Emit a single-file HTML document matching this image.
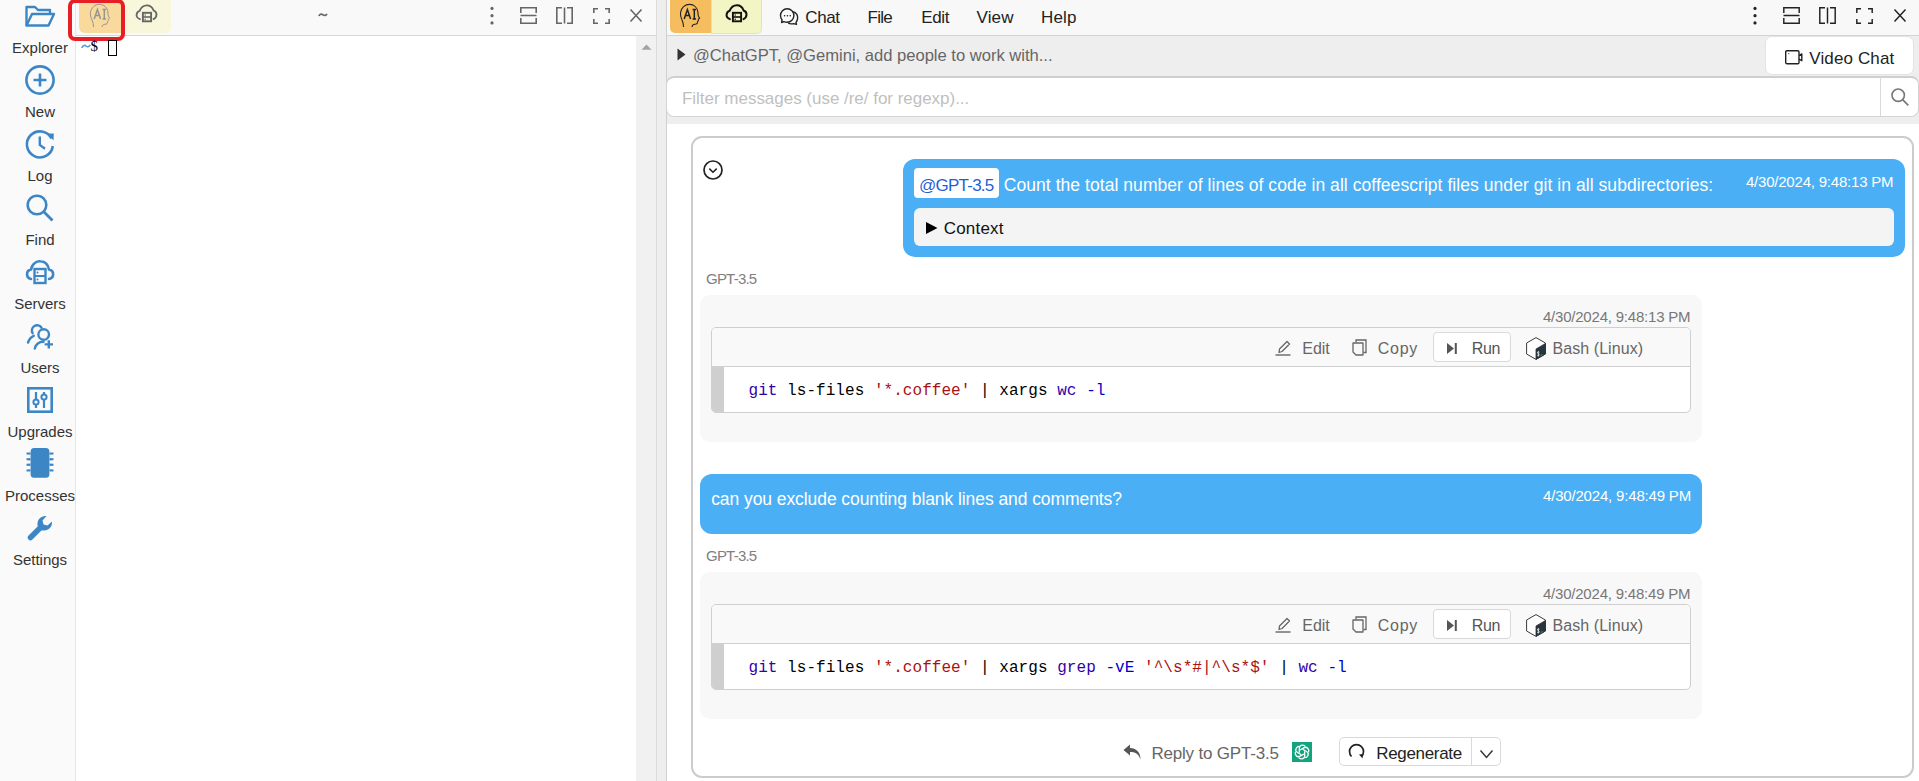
<!DOCTYPE html>
<html><head><meta charset="utf-8">
<style>
*{box-sizing:border-box;margin:0;padding:0}
html,body{width:1919px;height:781px;overflow:hidden;background:#fff;position:relative;font-family:"Liberation Sans",sans-serif}
.a{position:absolute}
.t{position:absolute;line-height:1;white-space:nowrap;font-family:"Liberation Sans",sans-serif}
.m{font-family:"Liberation Mono",monospace}
svg{position:absolute;overflow:visible}
</style></head><body>

<div class="a" style="left:0px;top:0px;width:76px;height:781px;background:#fafafa;border-right:1px solid #e6e6e6"></div>
<div class="t" style="left:12.07px;top:40.00px;font-size:15px;color:#333;letter-spacing:0.000px;">Explorer</div>
<div class="t" style="left:25.00px;top:104.00px;font-size:15px;color:#333;letter-spacing:0.000px;">New</div>
<div class="t" style="left:27.49px;top:168.00px;font-size:15px;color:#333;letter-spacing:0.000px;">Log</div>
<div class="t" style="left:25.41px;top:232.00px;font-size:15px;color:#333;letter-spacing:0.000px;">Find</div>
<div class="t" style="left:14.16px;top:296.00px;font-size:15px;color:#333;letter-spacing:0.000px;">Servers</div>
<div class="t" style="left:20.41px;top:360.00px;font-size:15px;color:#333;letter-spacing:0.000px;">Users</div>
<div class="t" style="left:7.48px;top:424.00px;font-size:15px;color:#333;letter-spacing:0.000px;">Upgrades</div>
<div class="t" style="left:4.99px;top:488.00px;font-size:15px;color:#333;letter-spacing:0.000px;">Processes</div>
<div class="t" style="left:12.90px;top:552.00px;font-size:15px;color:#333;letter-spacing:0.000px;">Settings</div>
<svg style="left:25px;top:5px" width="30" height="22" viewBox="0 0 30 22"><path d="M1.5 20.5 V2 H10 L13 5 H25 V9" fill="none" stroke="#3d86c6" stroke-width="2.4" stroke-linejoin="round"/><path d="M1.5 20.5 L7 9 H29 L23.5 20.5 Z" fill="none" stroke="#3d86c6" stroke-width="2.4" stroke-linejoin="round"/></svg>
<svg style="left:25px;top:65px" width="30" height="30" viewBox="0 0 30 30"><circle cx="15" cy="15" r="13.6" fill="none" stroke="#3d86c6" stroke-width="2.6"/><path d="M15 8.5V21.5M8.5 15H21.5" stroke="#3d86c6" stroke-width="2.6"/></svg>
<svg style="left:25px;top:129px" width="30" height="30" viewBox="0 0 30 30"><path d="M26.5 9.5 A13 13 0 1 0 27.8 17" fill="none" stroke="#3d86c6" stroke-width="2.6"/><path d="M22 4.5 L28.8 4.5 L28.5 11.5 Z" fill="#3d86c6"/><path d="M14.8 7.5 V16 L20 19.8" fill="none" stroke="#3d86c6" stroke-width="2.4"/></svg>
<svg style="left:26px;top:194px" width="28" height="27" viewBox="0 0 28 27"><circle cx="11" cy="11" r="9.3" fill="none" stroke="#3d86c6" stroke-width="2.6"/><path d="M17.8 17.8 L26.5 26.5" stroke="#3d86c6" stroke-width="2.8"/></svg>
<svg style="left:25px;top:260px" width="30" height="24" viewBox="0 0 30 24"><path d="M6 19 C1 18 0.5 10.5 6 9.5 C7 3.5 12 0.8 15.5 1.3 C20 1.5 23 4.5 24 9.5 C29.5 10.5 29.5 18 24 19" fill="none" stroke="#3d86c6" stroke-width="2.6" stroke-linecap="round"/><rect x="9.5" y="9" width="11" height="14" fill="none" stroke="#3d86c6" stroke-width="2.4"/><path d="M9.5 16H20.5" stroke="#3d86c6" stroke-width="2"/><circle cx="12.5" cy="12.5" r="1" fill="#3d86c6"/><circle cx="12.5" cy="19.5" r="1" fill="#3d86c6"/></svg>
<svg style="left:27px;top:323px" width="27" height="26" viewBox="0 0 27 26"><circle cx="16.7" cy="11.5" r="5.3" fill="none" stroke="#3d86c6" stroke-width="2.4"/><path d="M5.6 10.2 A5.2 5.2 0 1 1 14.6 4.8" fill="none" stroke="#3d86c6" stroke-width="2.4" stroke-linecap="round"/><path d="M1 19.5 C2 16.5 4 14 6.8 12.8" fill="none" stroke="#3d86c6" stroke-width="2.4" stroke-linecap="round"/><path d="M7.8 25.5 C8.8 21.5 12 18.8 16.5 18.8" fill="none" stroke="#3d86c6" stroke-width="2.4" stroke-linecap="round"/><path d="M21.8 17.2V25.6M17.6 21.4H26" stroke="#3d86c6" stroke-width="2.4"/></svg>
<svg style="left:27px;top:387px" width="26" height="26" viewBox="0 0 26 26"><rect x="1.3" y="1.3" width="23.4" height="23.4" fill="none" stroke="#3d86c6" stroke-width="2.6"/><path d="M9 5V21M17 5V21" stroke="#3d86c6" stroke-width="2.2"/><circle cx="9" cy="15" r="2.6" fill="#fafafa" stroke="#3d86c6" stroke-width="2"/><circle cx="17" cy="10" r="2.6" fill="#fafafa" stroke="#3d86c6" stroke-width="2"/></svg>
<svg style="left:25px;top:448px" width="30" height="30" viewBox="0 0 30 30"><rect x="5.6" y="0" width="18.8" height="29.8" rx="3.5" fill="#3d86c6"/><path d="M1.5 4.6 L5.5 4.3999999999999995 V6.8 L1.5 6.6 Z" fill="#3d86c6"/><path d="M28.5 4.6 L24.5 4.3999999999999995 V6.8 L28.5 6.6 Z" fill="#3d86c6"/><path d="M1.5 10.2 L5.5 10.0 V12.399999999999999 L1.5 12.2 Z" fill="#3d86c6"/><path d="M28.5 10.2 L24.5 10.0 V12.399999999999999 L28.5 12.2 Z" fill="#3d86c6"/><path d="M1.5 15.8 L5.5 15.600000000000001 V18.0 L1.5 17.8 Z" fill="#3d86c6"/><path d="M28.5 15.8 L24.5 15.600000000000001 V18.0 L28.5 17.8 Z" fill="#3d86c6"/><path d="M1.5 21.4 L5.5 21.2 V23.599999999999998 L1.5 23.4 Z" fill="#3d86c6"/><path d="M28.5 21.4 L24.5 21.2 V23.599999999999998 L28.5 23.4 Z" fill="#3d86c6"/></svg>
<svg style="left:27.5px;top:515px" width="25" height="25" viewBox="0 0 25 25"><path d="M2.5 22.5 L12.5 12.5" stroke="#3d86c6" stroke-width="5.5" stroke-linecap="round"/><path d="M10 12 C8 6 12 0.5 18.5 1 L14.5 5.5 L15.5 9.5 L19.5 10.5 L24 6.5 C24.5 13 19 17 13 15 Z" fill="#3d86c6"/></svg>
<div class="a" style="left:76px;top:0px;width:580px;height:36px;background:#f9f9f9;border-bottom:1px solid #d6d6d6"></div>
<div class="a" style="left:79px;top:0px;width:42px;height:33px;background:#f9d99c;border-radius:0 0 0 6px"></div>
<div class="a" style="left:121px;top:0px;width:50px;height:33px;background:#f8f7dc;border-radius:0 0 6px 0"></div>
<div class="a" style="left:68px;top:-1px;width:57px;height:41.5px;border:4.6px solid #e81e27;border-radius:7px"></div>
<svg style="left:317.5px;top:12.5px" width="10" height="4" viewBox="0 0 10 4"><path d="M0.9 3 C1.8 1 3.3 0.6 4.8 1.7 C6.2 2.8 7.8 2.9 9 0.9" fill="none" stroke="#666" stroke-width="1.7"/></svg>
<svg style="left:489.6px;top:6px" width="4" height="19" viewBox="0 0 4 19"><circle cx="2" cy="2.4" r="1.6" fill="#666"/><circle cx="2" cy="9.7" r="1.6" fill="#666"/><circle cx="2" cy="16.9" r="1.6" fill="#666"/></svg>
<svg style="left:520px;top:7px" width="17" height="17" viewBox="0 0 17 17"><path d="M0.8 6 V0.8 H16.2 V6 M0.8 11 V16.2 H16.2 V11 M0.5 8.5 H16.5" fill="none" stroke="#666" stroke-width="1.6"/></svg>
<svg style="left:556px;top:7px" width="17" height="17" viewBox="0 0 17 17"><path d="M6 0.8 H0.8 V16.2 H6 M11 0.8 H16.2 V16.2 H11 M8.5 0.5 V16.5" fill="none" stroke="#666" stroke-width="1.6"/></svg>
<svg style="left:592.5px;top:8px" width="17" height="16" viewBox="0 0 17 16"><path d="M0.8 5 V0.8 H5 M12 0.8 H16.2 V5 M0.8 11 V15.2 H5 M12 15.2 H16.2 V11" fill="none" stroke="#666" stroke-width="1.6"/></svg>
<svg style="left:630px;top:9px" width="12" height="13" viewBox="0 0 12 13"><path d="M0.5 0.5 L11.5 12.5 M11.5 0.5 L0.5 12.5" fill="none" stroke="#666" stroke-width="1.6"/></svg>
<svg style="left:81px;top:44px" width="10" height="5" viewBox="0 0 10 5"><path d="M0.8 4 C2 1.2 3.8 0.8 5 2 C6.2 3.2 8 3.2 9.2 0.8" fill="none" stroke="#5b9bd5" stroke-width="1.6"/></svg>
<div class="t" style="left:90.50px;top:39.00px;font-size:15px;color:#000;letter-spacing:0.000px;font-family:'Liberation Serif',serif">$</div>
<div class="a" style="left:108px;top:40px;width:9px;height:16px;border:1.2px solid #000;background:#fcfcfc"></div>
<div class="a" style="left:636px;top:36px;width:20px;height:745px;background:#f1f1f1"></div>
<svg style="left:641px;top:44px" width="11" height="6" viewBox="0 0 11 6"><path d="M0.5 5.8 L5.5 0.5 L10.5 5.8 Z" fill="#a3a3a3"/></svg>
<div class="a" style="left:656px;top:0px;width:11px;height:781px;background:#eeeeee;border-left:1px solid #dcdcdc;border-right:1px solid #d0d0d0"></div>
<div class="a" style="left:667px;top:0px;width:1252px;height:36px;background:#f8f8f8;border-bottom:1px solid #d3d3d3"></div>
<div class="a" style="left:670px;top:0px;width:41px;height:33px;background:#f5bd5e;border-radius:0 0 0 5px"></div>
<div class="a" style="left:711px;top:0px;width:51px;height:33.5px;background:#f3f5c5;border:1px solid #dedede;border-top:0;border-radius:0 0 5px 0"></div>
<div class="t" style="left:805.30px;top:9.00px;font-size:17px;color:#222;letter-spacing:-0.423px;">Chat</div>
<div class="t" style="left:867.60px;top:9.00px;font-size:17px;color:#222;letter-spacing:-0.790px;">File</div>
<div class="t" style="left:921.30px;top:9.00px;font-size:17px;color:#222;letter-spacing:-0.408px;">Edit</div>
<div class="t" style="left:976.50px;top:9.00px;font-size:17px;color:#222;letter-spacing:0.150px;">View</div>
<div class="t" style="left:1041.00px;top:9.00px;font-size:17px;color:#222;letter-spacing:0.188px;">Help</div>
<svg style="left:1752.6px;top:6px" width="4" height="19" viewBox="0 0 4 19"><circle cx="2" cy="2.4" r="1.6" fill="#222"/><circle cx="2" cy="9.7" r="1.6" fill="#222"/><circle cx="2" cy="16.9" r="1.6" fill="#222"/></svg>
<svg style="left:1783px;top:7px" width="17" height="17" viewBox="0 0 17 17"><path d="M0.8 6 V0.8 H16.2 V6 M0.8 11 V16.2 H16.2 V11 M0.5 8.5 H16.5" fill="none" stroke="#222" stroke-width="1.45"/></svg>
<svg style="left:1819px;top:7px" width="17" height="17" viewBox="0 0 17 17"><path d="M6 0.8 H0.8 V16.2 H6 M11 0.8 H16.2 V16.2 H11 M8.5 0.5 V16.5" fill="none" stroke="#222" stroke-width="1.45"/></svg>
<svg style="left:1855.5px;top:8px" width="17" height="16" viewBox="0 0 17 16"><path d="M0.8 5 V0.8 H5 M12 0.8 H16.2 V5 M0.8 11 V15.2 H5 M12 15.2 H16.2 V11" fill="none" stroke="#222" stroke-width="1.45"/></svg>
<svg style="left:1894px;top:9px" width="12" height="13" viewBox="0 0 12 13"><path d="M0.5 0.5 L11.5 12.5 M11.5 0.5 L0.5 12.5" fill="none" stroke="#222" stroke-width="1.45"/></svg>
<div class="a" style="left:667px;top:36px;width:1252px;height:88px;background:#eeeeee"></div>
<svg style="left:677px;top:48px" width="9" height="13" viewBox="0 0 9 13"><path d="M0.5 0.5 L8.5 6.5 L0.5 12.5 Z" fill="#333"/></svg>
<div class="t" style="left:693.00px;top:48.00px;font-size:16.6px;color:#666;letter-spacing:-0.014px;">@ChatGPT, @Gemini, add people to work with...</div>
<div class="a" style="left:1765px;top:36px;width:149px;height:39px;background:#fff;border:1px solid #e3e3e3;border-radius:7px"></div>
<div class="t" style="left:1809.30px;top:50.00px;font-size:17px;color:#222;letter-spacing:0.121px;">Video Chat</div>
<div class="a" style="left:666px;top:76px;width:1253px;height:41px;background:#fff;border:1px solid #d4d4d4;border-top:2px solid #cfcfcf;border-radius:8px"></div>
<div class="a" style="left:1880px;top:77px;width:1px;height:39px;background:#d9d9d9"></div>
<div class="t" style="left:682.00px;top:90.00px;font-size:17px;color:#bfbfbf;letter-spacing:-0.022px;">Filter messages (use /re/ for regexp)...</div>
<div class="a" style="left:691px;top:136px;width:1223px;height:642px;border:2px solid #cccccc;border-radius:11px"></div>
<svg style="left:703px;top:160px" width="20" height="20" viewBox="0 0 20 20"><circle cx="10" cy="10" r="9" fill="none" stroke="#222" stroke-width="1.7"/><path d="M6.3 8.6 L10 12.3 L13.7 8.6" fill="none" stroke="#222" stroke-width="1.5"/></svg>
<div class="a" style="left:903px;top:159px;width:1002px;height:98px;background:#4aaff5;border-radius:12px"></div>
<div class="a" style="left:914px;top:168px;width:85px;height:30px;background:#fff;border-radius:4px"></div>
<div class="t" style="left:919.00px;top:177.00px;font-size:17px;color:#1f5fd6;letter-spacing:-0.754px;">@GPT-3.5</div>
<div class="t" style="left:1003.75px;top:177.00px;font-size:17.5px;color:#fff;letter-spacing:0.056px;">Count the total number of lines of code in all coffeescript files under git in all subdirectories:</div>
<div class="t" style="left:1745.90px;top:174.00px;font-size:15px;color:#fff;letter-spacing:-0.205px;">4/30/2024, 9:48:13 PM</div>
<div class="a" style="left:914px;top:208px;width:980px;height:38px;background:#f4f4f4;border-radius:6px"></div>
<svg style="left:925.5px;top:222px" width="12" height="12" viewBox="0 0 12 12"><path d="M0 0 L11.5 6 L0 12 Z" fill="#000"/></svg>
<div class="t" style="left:943.70px;top:220.00px;font-size:17px;color:#111;letter-spacing:0.206px;">Context</div>
<div class="t" style="left:706.00px;top:271.00px;font-size:15px;color:#808080;letter-spacing:-0.779px;">GPT-3.5</div>
<div class="a" style="left:700px;top:295px;width:1002px;height:147px;background:#f8f8f8;border-radius:10px"></div>
<div class="t" style="left:1542.90px;top:309.00px;font-size:15px;color:#777;letter-spacing:-0.205px;">4/30/2024, 9:48:13 PM</div>
<div class="a" style="left:711px;top:327px;width:980px;height:86px;background:#fff;border:1px solid #cfcfcf;border-radius:5px;overflow:hidden"></div>
<div class="a" style="left:712px;top:328px;width:978px;height:39px;background:#f9f9f9;border-bottom:1px solid #d0d0d0;border-radius:4px 4px 0 0"></div>
<div class="a" style="left:712px;top:367px;width:12px;height:45px;background:#cfcfcf;border-radius:0 0 0 4px"></div>
<div class="t m" style="left:748.5px;top:383.14px;font-size:16px;letter-spacing:0.045px;color:#000"><span style="color:#3300aa">git</span> ls-files <span style="color:#aa1111">'*.coffee'</span> | xargs <span style="color:#3300aa">wc</span> <span style="color:#0000cc">-l</span></div>
<svg style="left:1275px;top:340px" width="16" height="16" viewBox="0 0 16 16"><path d="M4 12.5 L4.5 9 L12 1.5 L14.5 4 L7 11.5 Z" fill="none" stroke="#666" stroke-width="1.3" stroke-linejoin="round"/><path d="M0.5 15 H15.5" stroke="#666" stroke-width="1.4"/></svg>
<div class="t" style="left:1302.30px;top:341.00px;font-size:16px;color:#666;letter-spacing:-0.033px;">Edit</div>
<svg style="left:1352px;top:339px" width="15" height="17" viewBox="0 0 15 17"><path d="M4 3.5 V1 H14 V13.5 H11.5" fill="none" stroke="#666" stroke-width="1.3"/><path d="M1 4 H11 V16 H4 L1 13 Z" fill="none" stroke="#666" stroke-width="1.3" stroke-linejoin="round"/></svg>
<div class="t" style="left:1377.80px;top:341.00px;font-size:16px;color:#666;letter-spacing:0.713px;">Copy</div>
<div class="a" style="left:1433px;top:332px;width:78px;height:30px;background:#fff;border:1px solid #d9d9d9;border-radius:4px"></div>
<svg style="left:1446.5px;top:343px" width="10" height="11" viewBox="0 0 10 11"><path d="M0 0 L7 5.5 L0 11 Z" fill="#555"/><rect x="7.8" y="0" width="2" height="11" fill="#555"/></svg>
<div class="t" style="left:1471.70px;top:341.00px;font-size:16px;color:#555;letter-spacing:-0.280px;">Run</div>
<svg style="left:1525.8px;top:336.6px" width="20" height="23" viewBox="0 0 20 23"><path d="M10 0.6 L19.4 6 V17 L10 22.4 L0.6 17 V6 Z" fill="#fff" stroke="#3a3a3a" stroke-width="1" stroke-linejoin="round"/><path d="M10 12 L19.4 6.6 V17 L10 22.4 Z" fill="#2a343c" stroke="#2a343c" stroke-width="0.8" stroke-linejoin="round"/><path d="M12.3 14 V19.5" stroke="#fff" stroke-width="0.6"/><path d="M13.3 15.2 C12.5 14.5 11.3 15 11.6 16 C11.9 17 13.4 16.8 13.2 18 C13 19 11.8 18.9 11.3 18.3" fill="none" stroke="#fff" stroke-width="0.9"/><path d="M14.6 18.6 L16.6 17.5" stroke="#3fb34f" stroke-width="0.9"/></svg>
<div class="t" style="left:1552.50px;top:341.00px;font-size:16px;color:#666;letter-spacing:0.069px;">Bash (Linux)</div>
<div class="a" style="left:700px;top:474px;width:1002px;height:60px;background:#4aaff5;border-radius:12px"></div>
<div class="t" style="left:711.20px;top:491.00px;font-size:17.5px;color:#fff;letter-spacing:-0.073px;">can you exclude counting blank lines and comments?</div>
<div class="t" style="left:1543.00px;top:488.00px;font-size:15px;color:#fff;letter-spacing:-0.180px;">4/30/2024, 9:48:49 PM</div>
<div class="t" style="left:706.00px;top:548.00px;font-size:15px;color:#808080;letter-spacing:-0.779px;">GPT-3.5</div>
<div class="a" style="left:700px;top:572px;width:1002px;height:147px;background:#f8f8f8;border-radius:10px"></div>
<div class="t" style="left:1542.90px;top:586.00px;font-size:15px;color:#777;letter-spacing:-0.205px;">4/30/2024, 9:48:49 PM</div>
<div class="a" style="left:711px;top:604px;width:980px;height:86px;background:#fff;border:1px solid #cfcfcf;border-radius:5px;overflow:hidden"></div>
<div class="a" style="left:712px;top:605px;width:978px;height:39px;background:#f9f9f9;border-bottom:1px solid #d0d0d0;border-radius:4px 4px 0 0"></div>
<div class="a" style="left:712px;top:644px;width:12px;height:45px;background:#cfcfcf;border-radius:0 0 0 4px"></div>
<div class="t m" style="left:748.5px;top:660.14px;font-size:16px;letter-spacing:0.045px;color:#000"><span style="color:#3300aa">git</span> ls-files <span style="color:#aa1111">'*.coffee'</span> | xargs <span style="color:#3300aa">grep</span> <span style="color:#0000cc">-vE</span> <span style="color:#aa1111">'^\s*#|^\s*$'</span> | <span style="color:#3300aa">wc</span> <span style="color:#0000cc">-l</span></div>
<svg style="left:1275px;top:617px" width="16" height="16" viewBox="0 0 16 16"><path d="M4 12.5 L4.5 9 L12 1.5 L14.5 4 L7 11.5 Z" fill="none" stroke="#666" stroke-width="1.3" stroke-linejoin="round"/><path d="M0.5 15 H15.5" stroke="#666" stroke-width="1.4"/></svg>
<div class="t" style="left:1302.30px;top:618.00px;font-size:16px;color:#666;letter-spacing:-0.033px;">Edit</div>
<svg style="left:1352px;top:616px" width="15" height="17" viewBox="0 0 15 17"><path d="M4 3.5 V1 H14 V13.5 H11.5" fill="none" stroke="#666" stroke-width="1.3"/><path d="M1 4 H11 V16 H4 L1 13 Z" fill="none" stroke="#666" stroke-width="1.3" stroke-linejoin="round"/></svg>
<div class="t" style="left:1377.80px;top:618.00px;font-size:16px;color:#666;letter-spacing:0.713px;">Copy</div>
<div class="a" style="left:1433px;top:609px;width:78px;height:30px;background:#fff;border:1px solid #d9d9d9;border-radius:4px"></div>
<svg style="left:1446.5px;top:620px" width="10" height="11" viewBox="0 0 10 11"><path d="M0 0 L7 5.5 L0 11 Z" fill="#555"/><rect x="7.8" y="0" width="2" height="11" fill="#555"/></svg>
<div class="t" style="left:1471.70px;top:618.00px;font-size:16px;color:#555;letter-spacing:-0.280px;">Run</div>
<svg style="left:1525.8px;top:613.6px" width="20" height="23" viewBox="0 0 20 23"><path d="M10 0.6 L19.4 6 V17 L10 22.4 L0.6 17 V6 Z" fill="#fff" stroke="#3a3a3a" stroke-width="1" stroke-linejoin="round"/><path d="M10 12 L19.4 6.6 V17 L10 22.4 Z" fill="#2a343c" stroke="#2a343c" stroke-width="0.8" stroke-linejoin="round"/><path d="M12.3 14 V19.5" stroke="#fff" stroke-width="0.6"/><path d="M13.3 15.2 C12.5 14.5 11.3 15 11.6 16 C11.9 17 13.4 16.8 13.2 18 C13 19 11.8 18.9 11.3 18.3" fill="none" stroke="#fff" stroke-width="0.9"/><path d="M14.6 18.6 L16.6 17.5" stroke="#3fb34f" stroke-width="0.9"/></svg>
<div class="t" style="left:1552.50px;top:618.00px;font-size:16px;color:#666;letter-spacing:0.069px;">Bash (Linux)</div>
<svg style="left:1123px;top:743.5px" width="18" height="16" viewBox="0 0 18 16"><path d="M7 0.5 L0.5 6 L7 11.5 V8 C12 8 15.5 9.5 17.5 15.5 C17.5 8 13 4 7 4 Z" fill="#555"/></svg>
<div class="t" style="left:1151.40px;top:745.00px;font-size:17px;color:#666;letter-spacing:-0.186px;">Reply to GPT-3.5</div>
<svg style="left:1292px;top:742px" width="20" height="20" viewBox="0 0 20 20"><rect width="20" height="20" fill="#14a37f"/><g fill="none" stroke="#fff" stroke-width="1.25"><path id="op" d="M7.3 10.7 V6.4 C7.3 4.5 8.8 3.1 10.7 3.1 C11.8 3.1 12.8 3.6 13.4 4.5"/><use href="#op" transform="rotate(60 10 10)"/><use href="#op" transform="rotate(120 10 10)"/><use href="#op" transform="rotate(180 10 10)"/><use href="#op" transform="rotate(240 10 10)"/><use href="#op" transform="rotate(300 10 10)"/></g></svg>
<div class="a" style="left:1338.5px;top:736.5px;width:162px;height:29px;background:#fff;border:1px solid #d9d9d9;border-radius:5px"></div>
<div class="a" style="left:1471px;top:737px;width:1px;height:28px;background:#d9d9d9"></div>
<svg style="left:1347.8px;top:742.4px" width="17" height="18" viewBox="0 0 17 18"><path d="M3.5 14.5 A7 7 0 1 1 13.5 14.5" fill="none" stroke="#222" stroke-width="1.7"/><path d="M11 12.5 L14.8 12 L14.5 16.5 Z" fill="#222"/></svg>
<div class="t" style="left:1376.20px;top:745.00px;font-size:17px;color:#222;letter-spacing:-0.314px;">Regenerate</div>
<svg style="left:1480px;top:749.5px" width="13" height="8" viewBox="0 0 13 8"><path d="M0.5 0.5 L6.5 7.5 L12.5 0.5" fill="none" stroke="#333" stroke-width="1.4"/></svg>
<svg style="left:680px;top:3.9px" width="20" height="23" viewBox="0 0 20 23"><path d="M3.6 23 C3.5 20.5 3 18 2 16 C0.6 13.2 0.2 10.8 0.5 8.5 C1.2 3.5 5 0.4 9.5 0.4 C14 0.4 17.3 3.6 17.9 8 C18.1 9.6 17.9 11.2 18.6 12.6 L19.6 14.2 L18.3 15.3 C18.6 16.4 18.2 17.4 17.4 17.9 C17.8 19.4 16.8 20.4 14.8 20.3 C13.2 20.3 12.3 21.4 12 23" fill="none" stroke="#222" stroke-width="1.1"/><path d="M4.2 14.9 L7.4 5.6 L10.6 14.9 M5.4 11.6 H9.4" fill="none" stroke="#222" stroke-width="1.5"/><path d="M12.6 5.6 H16 M14.3 5.6 V14.9 M12.6 14.9 H16" fill="none" stroke="#222" stroke-width="1.5"/></svg>
<svg style="left:726px;top:5.2px" width="21" height="17" viewBox="0 0 21 17"><path d="M3.9 14.1 C1.5 13.2 0.3 11.5 0.6 9.5 C0.9 7.7 2 6.3 3.6 5.8 C5 2.4 7.8 0.3 10.9 0.3 C13.9 0.3 16.4 2.2 17.6 5.5 C19.4 6.1 20.5 7.6 20.5 9.6 C20.5 11.6 19.3 13.3 17.5 14.1" fill="none" stroke="#111" stroke-width="2" stroke-linecap="round"/><rect x="6.9" y="7.8" width="8.2" height="8.5" fill="none" stroke="#111" stroke-width="1.9"/><path d="M6.9 12 H15.1" stroke="#111" stroke-width="1.6"/><circle cx="9.2" cy="10" r="0.75" fill="#111"/><circle cx="9.2" cy="14.3" r="0.75" fill="#111"/></svg>
<svg style="left:90px;top:4.2px" width="20" height="23" viewBox="0 0 20 23"><path d="M3.6 23 C3.5 20.5 3 18 2 16 C0.6 13.2 0.2 10.8 0.5 8.5 C1.2 3.5 5 0.4 9.5 0.4 C14 0.4 17.3 3.6 17.9 8 C18.1 9.6 17.9 11.2 18.6 12.6 L19.6 14.2 L18.3 15.3 C18.6 16.4 18.2 17.4 17.4 17.9 C17.8 19.4 16.8 20.4 14.8 20.3 C13.2 20.3 12.3 21.4 12 23" fill="none" stroke="#959595" stroke-width="1.0"/><path d="M4.2 14.9 L7.4 5.6 L10.6 14.9 M5.4 11.6 H9.4" fill="none" stroke="#959595" stroke-width="1.5"/><path d="M12.6 5.6 H16 M14.3 5.6 V14.9 M12.6 14.9 H16" fill="none" stroke="#959595" stroke-width="1.5"/></svg>
<svg style="left:135.5px;top:5.4px" width="21" height="17" viewBox="0 0 21 17"><path d="M3.9 14.1 C1.5 13.2 0.3 11.5 0.6 9.5 C0.9 7.7 2 6.3 3.6 5.8 C5 2.4 7.8 0.3 10.9 0.3 C13.9 0.3 16.4 2.2 17.6 5.5 C19.4 6.1 20.5 7.6 20.5 9.6 C20.5 11.6 19.3 13.3 17.5 14.1" fill="none" stroke="#666" stroke-width="1.8" stroke-linecap="round"/><rect x="6.9" y="7.8" width="8.2" height="8.5" fill="none" stroke="#666" stroke-width="1.9"/><path d="M6.9 12 H15.1" stroke="#666" stroke-width="1.6"/><circle cx="9.2" cy="10" r="0.75" fill="#666"/><circle cx="9.2" cy="14.3" r="0.75" fill="#666"/></svg>
<svg style="left:779.5px;top:8px" width="19" height="17" viewBox="0 0 19 17"><path d="M13.2 3.6 C16.3 4.8 18 7.4 17.6 10.6 C17.4 12.3 16.6 13.5 16 14.3 L16.5 16.4 L13.6 15.6 C12 16 9.7 16 8.2 15.2" fill="none" stroke="#222" stroke-width="1.4" stroke-linejoin="round"/><path d="M7.2 0.8 C10.9 0.8 13.9 3.8 13.9 7.5 C13.9 11.2 10.9 14.2 7.2 14.2 C6 14.2 4.7 13.9 3.8 13.6 L1.6 14.5 L2 11.8 C1 10.6 0.5 9 0.5 7.5 C0.5 3.8 3.5 0.8 7.2 0.8 Z" fill="#fafafa" stroke="#222" stroke-width="1.4" stroke-linejoin="round"/><circle cx="4.6" cy="7.7" r="0.8" fill="#222"/><circle cx="7.4" cy="7.7" r="0.8" fill="#222"/><circle cx="10.2" cy="7.7" r="0.8" fill="#222"/></svg>
<svg style="left:1785px;top:49.5px" width="18" height="15" viewBox="0 0 18 15"><rect x="0.7" y="0.7" width="13.3" height="13" rx="1.2" fill="none" stroke="#222" stroke-width="1.4"/><path d="M14 5.5 L16.8 3.9 V10.7 L14 9.2" fill="none" stroke="#222" stroke-width="1.4" stroke-linejoin="round"/><circle cx="3.8" cy="3.6" r="0.7" fill="#444"/></svg>
<svg style="left:1891px;top:88px" width="18" height="18" viewBox="0 0 18 18"><circle cx="7.2" cy="7.2" r="6.2" fill="none" stroke="#777" stroke-width="1.6"/><path d="M11.6 11.6 L17.3 17.3" stroke="#777" stroke-width="1.7"/></svg>
</body></html>
